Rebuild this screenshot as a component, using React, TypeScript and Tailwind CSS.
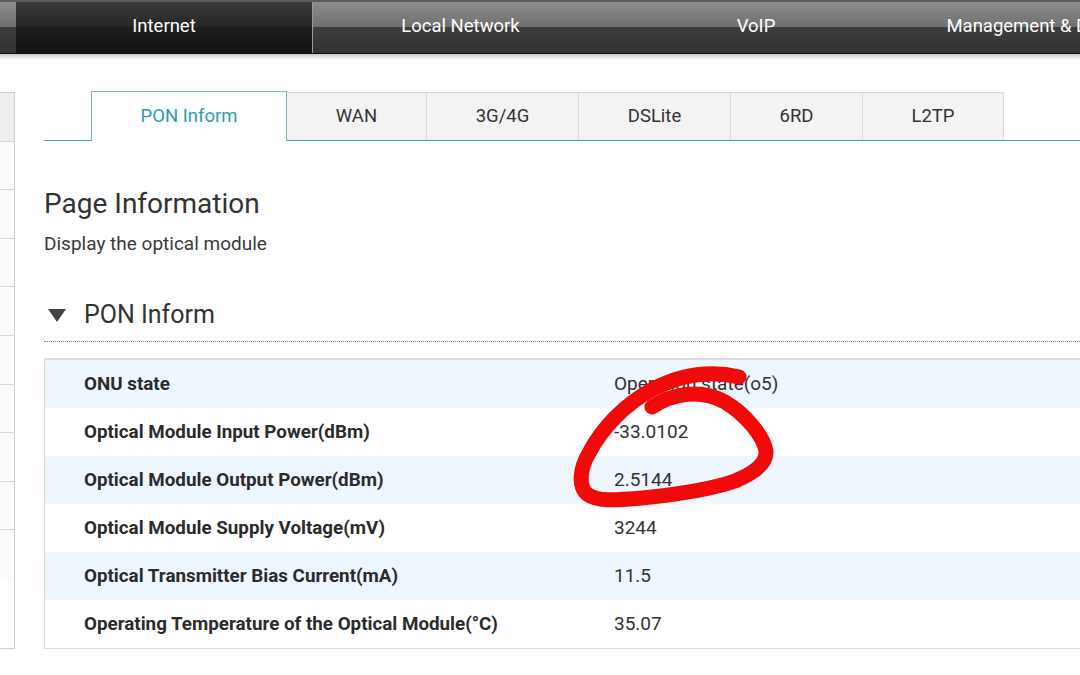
import React from "react";

const NAV = [
  { label: "", width: "w-[16px]", active: false },
  { label: "Internet", width: "w-[296px]", active: true },
  { label: "Local Network", width: "w-[296px]", active: false },
  { label: "VoIP", width: "w-[296px]", active: false },
  { label: "Management & Diagnosis", width: "w-[296px]", active: false },
];

const TABS = [
  { label: "PON Inform", width: "w-[196px]", active: true },
  { label: "WAN", width: "w-[140px]", active: false },
  { label: "3G/4G", width: "w-[152px]", active: false },
  { label: "DSLite", width: "w-[152px]", active: false },
  { label: "6RD", width: "w-[132px]", active: false },
  { label: "L2TP", width: "w-[141px]", active: false },
];

const ROWS = [
  { label: "ONU state", value: "Operation state(o5)" },
  { label: "Optical Module Input Power(dBm)", value: "-33.0102" },
  { label: "Optical Module Output Power(dBm)", value: "2.5144" },
  { label: "Optical Module Supply Voltage(mV)", value: "3244" },
  { label: "Optical Transmitter Bias Current(mA)", value: "11.5" },
  { label: "Operating Temperature of the Optical Module(°C)", value: "35.07" },
];

export default function App() {
  return (
    <div className="relative w-[1080px] h-[675px] overflow-hidden bg-white font-['Roboto','Liberation_Sans',sans-serif]">
      {/* Top menu */}
      <div className="flex h-[54px] border-t-2 border-[#5a5a5a] border-b border-b-[#111] overflow-hidden">
        {NAV.map((n, i) => (
          <div
            key={i}
            className={
              "shrink-0 h-full flex items-center justify-center pb-[1px] text-white text-[18.5px] whitespace-nowrap " +
              n.width +
              " " +
              (n.active
                ? "bg-[linear-gradient(to_bottom,#3a3a3a,#262626_50%,#1d1d1d_50%,#121212)]"
                : i === 2
                ? "border-l border-[#9a9a9a] bg-[linear-gradient(to_bottom,#8c8c8c,#6e6e6e_50%,#3d3d3d_50%,#333)]"
                : "bg-[linear-gradient(to_bottom,#8c8c8c,#6e6e6e_50%,#3d3d3d_50%,#333)]")
            }
          >
            {n.label}
          </div>
        ))}
      </div>
      <div className="h-[6px] bg-[linear-gradient(to_bottom,#c8c8c8,#ffffff)]" />

      <div className="flex mt-[31px]">
        {/* Left menu stub */}
        <div className="w-[15px] shrink-0 mt-[1px] border border-l-0 border-[#d0d0d0]">
          <div className="h-[48.6px] bg-[#efefef] border-b border-[#d6d6d6]" />
          {Array.from({ length: 9 }).map((_, i) => (
            <div key={i} className="h-[48.6px] bg-[#fbfbfb] border-b border-[#d6d6d6] last:border-b-0" />
          ))}
        </div>

        {/* Content */}
        <div className="ml-[29px] w-[1100px] shrink-0">
          {/* Sub tabs */}
          <div className="flex h-[50px] items-end border-b border-[#3ea3b1]">
            {TABS.map((t) =>
              t.active ? (
                <div
                  key={t.label}
                  className={
                    "ml-[47px] h-[50px] -mb-px bg-white border border-b-0 border-[#7fb6bd] flex items-center justify-center text-[18.5px] text-[#2e9bb0] " +
                    t.width
                  }
                >
                  {t.label}
                </div>
              ) : (
                <div
                  key={t.label}
                  className={
                    "h-[48px] bg-[#f3f3f3] border border-b-0 border-l-0 border-[#dadada] flex items-center justify-center text-[18.5px] text-[#333] " +
                    t.width
                  }
                >
                  {t.label}
                </div>
              )
            )}
          </div>

          <h1 className="mt-[45px] text-[28px] leading-[36px] text-[#333]">Page Information</h1>
          <p className="mt-[10px] text-[19px] leading-[24px] text-[#3a3a3a]">Display the optical module</p>

          <div className="mt-[41px] pb-[8px] border-b border-dotted border-[#8a8a8a] flex items-center">
            <svg width="18" height="14" viewBox="0 0 18 14" className="ml-[4px]">
              <polygon points="0,1 18,1 9,14" fill="#444" />
            </svg>
            <span className="ml-[18px] text-[25px] leading-[36px] text-[#333]">PON Inform</span>
          </div>

          <div className="mt-[16px] border border-t-2 border-[#dcdcdc]">
            {ROWS.map((r, i) => (
              <div
                key={r.label}
                className={
                  "flex h-[48px] items-center text-[19px] " + (i % 2 === 0 ? "bg-[#eef6fe]" : "bg-white")
                }
              >
                <div className="w-[569px] pl-[39px] font-bold text-[18.8px] text-[#2b2b2b]">{r.label}</div>
                <div className="text-[#333]">{r.value}</div>
              </div>
            ))}
          </div>
        </div>
      </div>

      {/* Red marker annotation */}
      <svg className="absolute inset-0 pointer-events-none" width="1080" height="675" viewBox="0 0 1080 675">
        <path
          d="M652,407 C672,394 700,388 725,402 C745,414 763,435 766,451 C767,464 752,474 735,481 C712,489 672,495 642,498 C617,500 597,502 587,494 C578,486 580,468 589,453 C602,428 625,404 653,389 C680,375 710,370 739,377"
          fill="none"
          stroke="#f20a0a"
          strokeWidth="15"
          strokeLinecap="round"
          strokeLinejoin="round"
        />
      </svg>
    </div>
  );
}
